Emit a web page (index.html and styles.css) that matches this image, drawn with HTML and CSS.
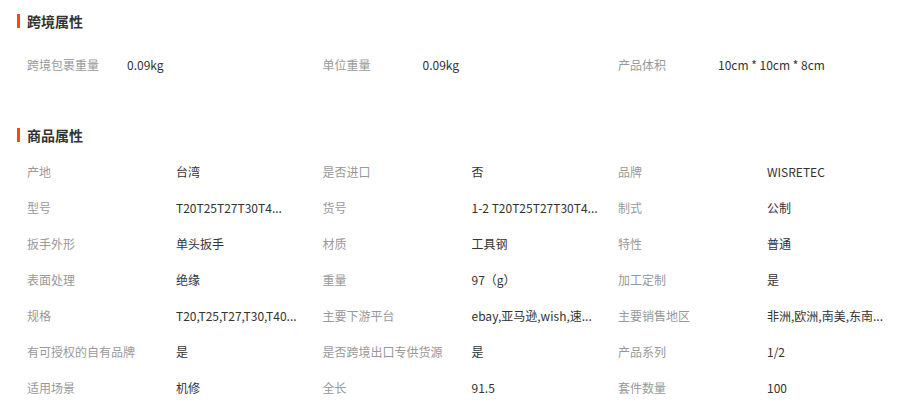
FILE: index.html
```html
<!DOCTYPE html>
<html lang="zh-CN">
<head>
    <meta charset="UTF-8">
    <title>商品属性</title>
    <link rel="stylesheet" href="styles.css">
</head>
<body>
    <div class="section section-cross">
        <h3 class="section-title"><span class="bar"></span>跨境属性</h3>
        <div class="attr-grid cross-grid">
            <div class="attr"><span class="attr-name">跨境包裹重量</span><span class="attr-value">0.09kg</span></div>
            <div class="attr"><span class="attr-name">单位重量</span><span class="attr-value">0.09kg</span></div>
            <div class="attr"><span class="attr-name">产品体积</span><span class="attr-value">10cm * 10cm * 8cm</span></div>
        </div>
    </div>

    <div class="section section-goods">
        <h3 class="section-title"><span class="bar"></span>商品属性</h3>
        <div class="attr-grid goods-grid">
            <div class="attr"><span class="attr-name">产地</span><span class="attr-value">台湾</span></div>
            <div class="attr"><span class="attr-name">是否进口</span><span class="attr-value">否</span></div>
            <div class="attr"><span class="attr-name">品牌</span><span class="attr-value">WISRETEC</span></div>

            <div class="attr"><span class="attr-name">型号</span><span class="attr-value" title="T20T25T27T30T40T45T50">T20T25T27T30T4...</span></div>
            <div class="attr"><span class="attr-name">货号</span><span class="attr-value" title="1-2 T20T25T27T30T40T45">1-2 T20T25T27T30T4...</span></div>
            <div class="attr"><span class="attr-name">制式</span><span class="attr-value">公制</span></div>

            <div class="attr"><span class="attr-name">扳手外形</span><span class="attr-value">单头扳手</span></div>
            <div class="attr"><span class="attr-name">材质</span><span class="attr-value">工具钢</span></div>
            <div class="attr"><span class="attr-name">特性</span><span class="attr-value">普通</span></div>

            <div class="attr"><span class="attr-name">表面处理</span><span class="attr-value">绝缘</span></div>
            <div class="attr"><span class="attr-name">重量</span><span class="attr-value">97（g）</span></div>
            <div class="attr"><span class="attr-name">加工定制</span><span class="attr-value">是</span></div>

            <div class="attr"><span class="attr-name">规格</span><span class="attr-value" title="T20,T25,T27,T30,T40,T45,T50">T20,T25,T27,T30,T40...</span></div>
            <div class="attr"><span class="attr-name">主要下游平台</span><span class="attr-value" title="ebay,亚马逊,wish,速卖通">ebay,亚马逊,wish,速...</span></div>
            <div class="attr"><span class="attr-name">主要销售地区</span><span class="attr-value" title="非洲,欧洲,南美,东南亚">非洲,欧洲,南美,东南...</span></div>

            <div class="attr"><span class="attr-name">有可授权的自有品牌</span><span class="attr-value">是</span></div>
            <div class="attr"><span class="attr-name">是否跨境出口专供货源</span><span class="attr-value">是</span></div>
            <div class="attr"><span class="attr-name">产品系列</span><span class="attr-value">1/2</span></div>

            <div class="attr"><span class="attr-name">适用场景</span><span class="attr-value">机修</span></div>
            <div class="attr"><span class="attr-name">全长</span><span class="attr-value">91.5</span></div>
            <div class="attr"><span class="attr-name">套件数量</span><span class="attr-value">100</span></div>
        </div>
    </div>
</body>
</html>
```

FILE: styles.css
```css
body {
    margin: 0;
    background-color: #fff;
    font-family: "Microsoft YaHei", "Noto Sans CJK SC", "Liberation Sans", sans-serif;
    font-size: 12px;
    color: #333;
    overflow: hidden;
}
.section {
    padding-left: 17px;
}
.section-cross {
    padding-top: 11px;
}
.section-goods {
    margin-top: 43px;
}
.section-title {
    display: flex;
    align-items: center;
    height: 20px;
    margin: 0;
    font-size: 14px;
    font-weight: bold;
    color: #333;
}
.bar {
    width: 3px;
    height: 14px;
    margin-right: 7px;
    background-color: #ff4a00;
}
.attr-grid {
    display: grid;
    grid-template-columns: repeat(3, 295.5px);
    padding-left: 10px;
}
.cross-grid {
    margin-top: 15px;
}
.goods-grid {
    margin-top: 8px;
}
.attr {
    display: flex;
    align-items: center;
    height: 36px;
    white-space: nowrap;
}
.attr-name {
    flex: none;
    color: #999;
}
.attr-value {
    color: #333;
}
.cross-grid .attr-name {
    width: 100px;
}
.goods-grid .attr-name {
    width: 149px;
}
```
